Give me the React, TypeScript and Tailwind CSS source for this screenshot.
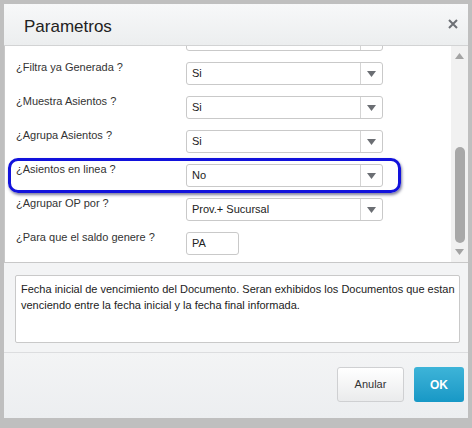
import React from 'react'

type Row = { label: string; value: string; kind: 'select' | 'input' }

const ROWS: Row[] = [
  { label: '', value: '', kind: 'select' },
  { label: '¿Filtra ya Generada ?', value: 'Si', kind: 'select' },
  { label: '¿Muestra Asientos ?', value: 'Si', kind: 'select' },
  { label: '¿Agrupa Asientos ?', value: 'Si', kind: 'select' },
  { label: '¿Asientos en linea ?', value: 'No', kind: 'select' },
  { label: '¿Agrupar OP por ?', value: 'Prov.+ Sucursal', kind: 'select' },
  { label: '¿Para que el saldo genere ?', value: 'PA', kind: 'input' },
]

function Caret({ up = false, color = '#666' }: { up?: boolean; color?: string }) {
  return (
    <svg width="9" height="6" viewBox="0 0 9 6">
      <path d={up ? 'M0 6 L4.5 0 L9 6 Z' : 'M0 0 L9 0 L4.5 6 Z'} fill={color} />
    </svg>
  )
}

function Field({ row }: { row: Row }) {
  if (row.kind === 'input') {
    return (
      <div className="mt-[3px] w-[53px] h-[23px] border border-[#c9c9c9] rounded-[3px] bg-white flex items-center px-[5px] text-[11px] text-[#222]">
        {row.value}
      </div>
    )
  }
  return (
    <div className="mt-[3px] w-[197px] h-[23px] border border-[#c9c9c9] rounded-[3px] bg-white flex">
      <div className="flex-1 flex items-center px-[5px] text-[11px] text-[#222]">{row.value}</div>
      <div className="w-[22px] border-l border-[#d4d4d4] flex items-center justify-center">
        <Caret color="#6b6e73" />
      </div>
    </div>
  )
}

export default function App() {
  return (
    <div className="relative w-[472px] h-[428px] bg-[#bfbfbf] pt-[4px] pl-[4px] font-['Liberation_Sans',Arial,sans-serif]">
      <div className="w-[464px] h-[414px] flex flex-col bg-white">
        {/* header */}
        <div className="h-[42px] shrink-0 border-b border-[#d2d3d4] bg-gradient-to-b from-[#f7f8f9] to-[#eceeef] flex items-center justify-between pl-[20px] pr-[10px]">
          <span className="text-[17px] text-[#222] mt-[4px]">Parametros</span>
          <svg width="10" height="10" viewBox="0 0 10 10" className="mt-[-2px]">
            <path d="M1 1 L9 9 M9 1 L1 9" stroke="#6d7075" strokeWidth="2" />
          </svg>
        </div>

        {/* scrolling parameter list */}
        <div className="h-[217px] shrink-0 flex border-b border-l border-[#c8c8c8]">
          <div className="flex-1 overflow-hidden">
            <div className="mt-[-21px]">
              {ROWS.map((r, i) => (
                <div key={i} className="h-[34px] flex items-start">
                  <div className="w-[181px] pl-[11px] text-[11px] leading-[16px] text-[#333]">{r.label}</div>
                  <Field row={r} />
                </div>
              ))}
            </div>
          </div>
          <div className="w-[17px] bg-[#f1f1f1] flex flex-col items-center">
            <div className="h-[20px] flex items-center">
              <Caret up color="#a3a3a3" />
            </div>
            <div className="flex-1 w-full px-[3px] pt-[81px]">
              <div className="h-[96px] w-[10px] rounded-full bg-[#a8a8a8] mx-auto" />
            </div>
            <div className="h-[20px] flex items-center">
              <Caret color="#a3a3a3" />
            </div>
          </div>
        </div>

        {/* description */}
        <div className="h-[89px] shrink-0 bg-[#f3f4f5] pt-[12px] pl-[11px] pr-[8px]">
          <div className="h-[68px] border border-[#c9c9c9] rounded-[2px] bg-white px-[5px] pt-[5px] text-[11px] leading-[16px] text-[#222] whitespace-nowrap">
            <div>Fecha inicial de vencimiento del Documento. Seran exhibidos los Documentos que estan</div>
            <div>venciendo entre la fecha inicial y la fecha final informada.</div>
          </div>
        </div>

        {/* footer */}
        <div className="flex-1 border-t border-[#dcdddf] bg-gradient-to-b from-[#f3f4f5] to-[#eceef0] flex justify-end items-start pt-[14px] pr-[4px] gap-[10px]">
          <button className="w-[67px] h-[35px] rounded-[3px] border border-[#cfd0d2] bg-gradient-to-b from-[#ffffff] to-[#eaebec] text-[11px] text-[#333]">
            Anular
          </button>
          <button className="w-[50px] h-[35px] rounded-[3px] bg-gradient-to-b from-[#3db4d8] to-[#1698c6] text-[12px] font-bold text-white">
            OK
          </button>
        </div>
      </div>

      {/* highlight annotation */}
      <div className="absolute left-[8px] top-[158px] w-[393px] h-[35px] border-[3px] border-[#1212dc] rounded-[10px] shadow-[1px_2px_3px_rgba(0,0,60,0.5)]" />
    </div>
  )
}
